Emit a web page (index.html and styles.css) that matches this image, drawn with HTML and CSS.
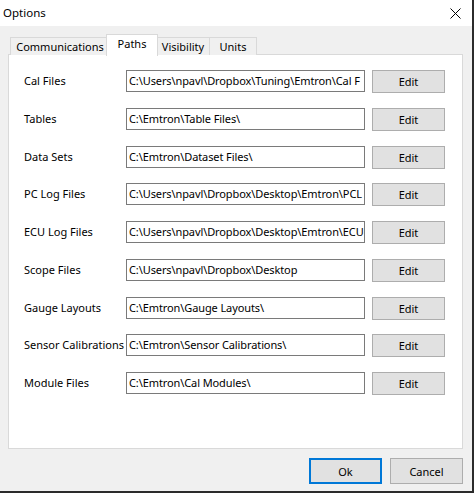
FILE: index.html
```html
<!DOCTYPE html>
<html>
<head>
<meta charset="utf-8">
<link rel="stylesheet" href="styles.css">
</head>
<body>
<div class="window">
  <div class="titlebar">
    <span class="title">Options</span>
    <svg class="close" width="11" height="11" viewBox="0 0 11 11"><path d="M0.5 0.5 L10.5 10.5 M10.5 0.5 L0.5 10.5" stroke="#000" stroke-width="1" fill="none"/></svg>
  </div>
  <div class="content">
    <div class="tabs">
      <div class="tab t-comm">Communications</div>
      <div class="tab t-paths selected">Paths</div>
      <div class="tab t-vis">Visibility</div>
      <div class="tab t-units">Units</div>
    </div>
    <div class="panel">
      <div class="row"><span class="label">Cal Files</span><div class="field">C:\Users\npavl\Dropbox\Tuning\Emtron\Cal F</div><button class="btn edit">Edit</button></div>
      <div class="row"><span class="label">Tables</span><div class="field">C:\Emtron\Table Files\</div><button class="btn edit">Edit</button></div>
      <div class="row"><span class="label">Data Sets</span><div class="field">C:\Emtron\Dataset Files\</div><button class="btn edit">Edit</button></div>
      <div class="row"><span class="label">PC Log Files</span><div class="field">C:\Users\npavl\Dropbox\Desktop\Emtron\PCL</div><button class="btn edit">Edit</button></div>
      <div class="row"><span class="label">ECU Log Files</span><div class="field">C:\Users\npavl\Dropbox\Desktop\Emtron\ECU</div><button class="btn edit">Edit</button></div>
      <div class="row"><span class="label">Scope Files</span><div class="field">C:\Users\npavl\Dropbox\Desktop</div><button class="btn edit">Edit</button></div>
      <div class="row"><span class="label">Gauge Layouts</span><div class="field">C:\Emtron\Gauge Layouts\</div><button class="btn edit">Edit</button></div>
      <div class="row"><span class="label">Sensor Calibrations</span><div class="field">C:\Emtron\Sensor Calibrations\</div><button class="btn edit">Edit</button></div>
      <div class="row"><span class="label">Module Files</span><div class="field">C:\Emtron\Cal Modules\</div><button class="btn edit">Edit</button></div>
    </div>
    <div class="footer">
      <button class="btn dlg ok">Ok</button>
      <button class="btn dlg cancel">Cancel</button>
    </div>
  </div>
</div>
</body>
</html>
```

FILE: styles.css
```css
* { box-sizing: border-box; }
html, body { margin: 0; padding: 0; }
body {
  font-family: "Noto Sans", "Open Sans", sans-serif;
  font-size: 11px;
  color: #000;
  background: #f0f0f0;
}
.window {
  width: 474px;
  height: 493px;
  border-right: 2px solid #2b2b2b;
  border-bottom: 2px solid #2b2b2b;
  display: flex;
  flex-direction: column;
  background: #f0f0f0;
}
.titlebar {
  height: 26px;
  background: #fff;
  display: flex;
  align-items: center;
  justify-content: space-between;
  padding: 0 11px 0 3px;
  flex: none;
}
.title { font-size: 11.5px; line-height: 16px; }
.close { display: block; }
.content {
  flex: 1;
  display: flex;
  flex-direction: column;
  padding: 8px 9px 0 8px;
}
.tabs {
  display: flex;
  align-items: flex-end;
  height: 21px;
  padding-left: 2px;
  position: relative;
  z-index: 1;
  margin-bottom: -1px;
}
.tab {
  height: 18px;
  border: 1px solid #d9d9d9;
  border-bottom: none;
  background: #f0f0f0;
  display: flex;
  align-items: center;
  justify-content: center;
  line-height: 16px;
  margin-left: -1px;
  padding-top: 1px;
}
.tab:first-child { margin-left: 0; }
.t-comm { width: 98px; padding-left: 2px; }
.t-paths { width: 52px; }
.t-vis { width: 54px; }
.t-units { width: 48px; }
.tab.selected {
  height: 22px;
  background: #fff;
  margin-bottom: -1px;
  padding-top: 0;
  padding-bottom: 4px;
  margin-left: -2px;
  margin-right: -1px;
  position: relative;
}
.panel {
  height: 395px;
  background: #fff;
  border: 1px solid #d9d9d9;
  padding: 15px 0 0 15px;
  display: flex;
  flex-direction: column;
  gap: 14.75px;
}
.row {
  display: flex;
  align-items: flex-start;
  height: 23px;
}
.label {
  width: 102px;
  line-height: 22px;
  white-space: nowrap;
}
.field {
  width: 239px;
  height: 22px;
  border: 1px solid #7a7a7a;
  background: #fff;
  line-height: 20px;
  padding-left: 2px;
  white-space: nowrap;
  overflow: hidden;
  letter-spacing: -0.1px;
}
.btn {
  font-family: inherit;
  font-size: 11px;
  color: #000;
  background: #e1e1e1;
  border: 1px solid #adadad;
  padding: 0;
  margin: 0;
}
.edit {
  width: 73px;
  height: 23px;
  margin-left: 7px;
}
.footer {
  display: flex;
  justify-content: flex-end;
  gap: 8px;
  padding-top: 9px;
  padding-right: 0;
}
.dlg {
  width: 73px;
  height: 26px;
}
.ok { border: 2px solid #0078d7; }
```
